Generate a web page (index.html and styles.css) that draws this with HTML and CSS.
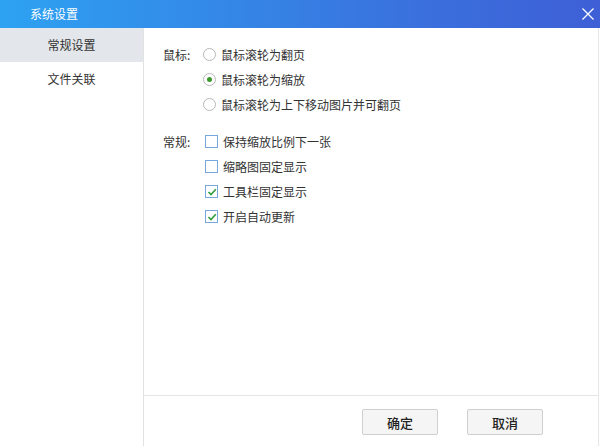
FILE: index.html
```html
<!DOCTYPE html>
<html lang="zh-CN">
<head>
  <meta charset="UTF-8" />
  <meta name="viewport" content="width=device-width, initial-scale=1.0" />
  <title>系统设置</title>
  <link rel="stylesheet" href="styles.css">
</head>
<body>
  <div class="window">
    <div class="titlebar">
      <span class="title">系统设置</span>
      <svg class="close" width="12" height="12" viewBox="0 0 12 12">
        <path d="M0.5 0.5 L11.5 11.5 M11.5 0.5 L0.5 11.5" stroke="#fff" stroke-width="1.2" fill="none" />
      </svg>
    </div>

    <div class="body">
      <div class="sidebar">
        <div class="nav-item active">常规设置</div>
        <div class="nav-item">文件关联</div>
      </div>

      <div class="panel">
        <div class="settings">
          <div class="group">
            <div class="group-label">鼠标:</div>
            <div class="options">
              <div class="option"><span class="radio"></span>鼠标滚轮为翻页</div>
              <div class="option"><span class="radio checked"></span>鼠标滚轮为缩放</div>
              <div class="option"><span class="radio"></span>鼠标滚轮为上下移动图片并可翻页</div>
            </div>
          </div>

          <div class="group">
            <div class="group-label">常规:</div>
            <div class="options">
              <div class="option"><span class="check"></span>保持缩放比例下一张</div>
              <div class="option"><span class="check"></span>缩略图固定显示</div>
              <div class="option">
                <span class="check">
                  <svg width="10" height="10" viewBox="0 0 10 10"><path d="M1.5 5 L4 7.5 L8.8 2.3" stroke="#2f9e3a" stroke-width="1.6" fill="none" /></svg>
                </span>工具栏固定显示
              </div>
              <div class="option">
                <span class="check">
                  <svg width="10" height="10" viewBox="0 0 10 10"><path d="M1.5 5 L4 7.5 L8.8 2.3" stroke="#2f9e3a" stroke-width="1.6" fill="none" /></svg>
                </span>开启自动更新
              </div>
            </div>
          </div>
        </div>

        <div class="footer">
          <button class="btn">确定</button>
          <button class="btn">取消</button>
        </div>
      </div>
    </div>
  </div>
</body>
</html>
```

FILE: styles.css
```css
body {
  margin: 0;
  padding: 0;
  font-family: "Noto Sans CJK SC", "Noto Sans", sans-serif;
  font-size: 12px;
  color: #333;
  background: #fff;
}

.window {
  width: 600px;
  height: 446px;
  display: flex;
  flex-direction: column;
  overflow: hidden;
}

.titlebar {
  height: 28px;
  flex: none;
  display: flex;
  align-items: center;
  justify-content: space-between;
  padding: 0 6px 0 30px;
  background: linear-gradient(90deg, #2da2f2, #3a70dd 70%, #3e5fd6);
  color: #fff;
}

.title {
  font-size: 12px;
  line-height: 28px;
}

.close {
  display: block;
}

.body {
  flex: 1;
  display: flex;
  min-height: 0;
}

.sidebar {
  width: 143px;
  flex: none;
  border-right: 1px solid #e2e2e2;
}

.nav-item {
  height: 34px;
  line-height: 34px;
  text-align: center;
  color: #333;
}

.nav-item.active {
  background: #e3e6ea;
}

.panel {
  width: 454px;
  flex: none;
  display: flex;
  flex-direction: column;
  border-right: 1px solid #e6e6e6;
}

.settings {
  flex: 1;
  padding: 14px 0 0 19px;
}

.group {
  display: flex;
  margin-bottom: 12px;
}

.group-label {
  width: 40px;
  line-height: 25px;
}

.option {
  height: 25px;
  display: flex;
  align-items: center;
}

.radio {
  width: 11px;
  height: 11px;
  border: 1px solid #b8b8b8;
  border-radius: 50%;
  margin-right: 5px;
  display: flex;
  align-items: center;
  justify-content: center;
  background: #fff;
}

.radio.checked::after {
  content: "";
  width: 5px;
  height: 5px;
  border-radius: 50%;
  background: #3c9a2c;
}

.check {
  width: 11px;
  height: 11px;
  border: 1px solid #76a8de;
  margin: 0 5px 0 2px;
  display: flex;
  align-items: center;
  justify-content: center;
  background: #fff;
}

.check svg {
  display: block;
}

.footer {
  height: 51px;
  flex: none;
  border-top: 1px solid #e6e6e6;
  display: flex;
  justify-content: flex-end;
  align-items: flex-start;
  gap: 29px;
  padding: 13px 55px 0 0;
  box-sizing: border-box;
}

.btn {
  width: 76px;
  height: 26px;
  border: 1px solid #cfcfcf;
  border-radius: 2px;
  background: #f5f5f5;
  font-family: "Noto Sans CJK SC", "Noto Sans", sans-serif;
  font-size: 13px;
  font-weight: 500;
  color: #222;
  padding: 0;
}
```
